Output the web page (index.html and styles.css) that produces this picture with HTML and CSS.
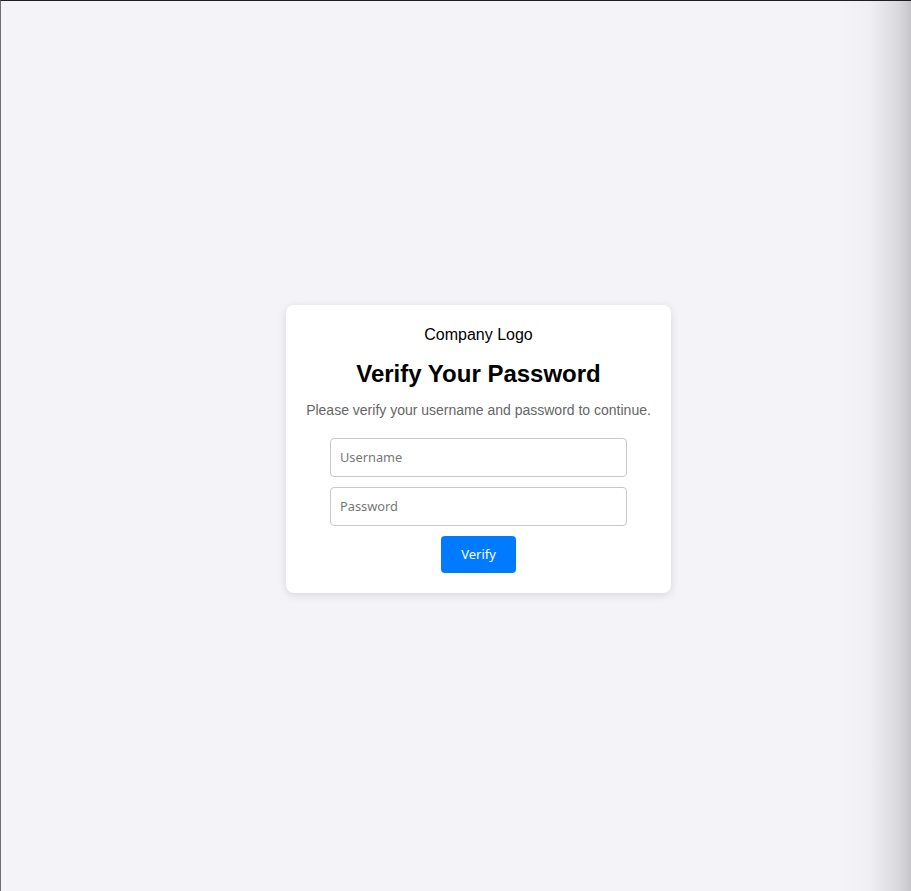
FILE: index.html
```html
<!DOCTYPE html>
<html lang="en">
<head>
<meta charset="utf-8">
<title>Verify Your Password</title>
<link rel="stylesheet" href="styles.css">
</head>
<body>
<div class="page">
  <div class="card">
    <div class="logo">Company Logo</div>
    <h2 class="title">Verify Your Password</h2>
    <p class="subtitle">Please verify your username and password to continue.</p>
    <form class="form">
      <input class="field" type="text" placeholder="Username">
      <input class="field" type="password" placeholder="Password">
      <button class="btn" type="button">Verify</button>
    </form>
  </div>
</div>
</body>
</html>
```
FILE: styles.css
```css
html, body {
  margin: 0;
  padding: 0;
  height: 100%;
}
body {
  font-family: "Liberation Sans", Arial, sans-serif;
  background: linear-gradient(to right, #f4f4f8 0, #f4f4f8 calc(100% - 70px), #efeff3 calc(100% - 40px), #d9d9dd calc(100% - 12px), #c6c6ca 100%);
  border-top: 1px solid #1e1f22;
  border-left: 1px solid #6f7075;
  box-sizing: border-box;
}
.page {
  min-height: 100%;
  box-sizing: border-box;
  padding: 5px 0 0 45px;
  display: flex;
  align-items: center;
  justify-content: center;
}
.card {
  background: #ffffff;
  border-radius: 8px;
  box-shadow: 0 2px 8px rgba(0, 0, 0, 0.12);
  padding: 20px;
  text-align: center;
  display: flex;
  flex-direction: column;
  align-items: center;
}
.logo {
  font-size: 16px;
  line-height: 18px;
  padding-top: 1px;
  color: #000;
}
.title {
  margin: 16px 0 0;
  font-size: 24px;
  line-height: 28px;
  font-weight: bold;
  color: #000;
}
.subtitle {
  margin: 14px 0 0;
  font-size: 14px;
  line-height: 16px;
  color: #666;
}
.form {
  margin-top: 20px;
  display: flex;
  flex-direction: column;
  align-items: center;
  gap: 10px;
}
.field {
  width: 297px;
  height: 39px;
  box-sizing: border-box;
  border: 1px solid #c8c8c8;
  border-radius: 4px;
  padding: 0 9px;
  font-family: "Noto Sans", "Open Sans", sans-serif;
  font-size: 12.8px;
  color: #333;
  background: #fff;
}
.field::placeholder {
  color: #777;
}
.btn {
  width: 75px;
  height: 37px;
  border: none;
  border-radius: 4px;
  background: #007bff;
  color: #fff;
  font-family: "Noto Sans", "Open Sans", sans-serif;
  font-size: 13px;
  cursor: pointer;
}
```
